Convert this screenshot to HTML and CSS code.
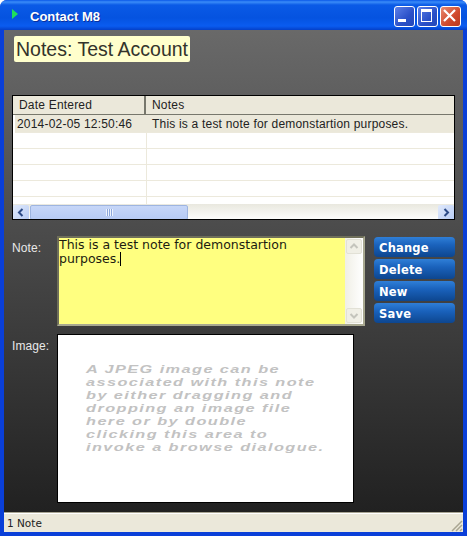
FILE: index.html
```html
<!DOCTYPE html>
<html lang="en">
<head>
    <meta charset="UTF-8">
    <meta name="viewport" content="width=device-width, initial-scale=1.0">
    <title>Contact M8</title>
    <link rel="stylesheet" href="styles.css">
</head>
<body>
    <div class="window">
        <!-- Title bar -->
        <div class="titlebar">
            <svg class="app-icon" width="6" height="10" viewBox="0 0 6 10"><path d="M0 0L6 5L0 10Z" fill="#1fe05a"/></svg>
            <span class="title-text">Contact M8</span>
            <div class="caption-buttons">
                <div class="cap-btn">
                    <svg width="21" height="21" viewBox="0 0 21 21"><rect x="4" y="13" width="8" height="3" fill="#fff"/></svg>
                </div>
                <div class="cap-btn">
                    <svg width="21" height="21" viewBox="0 0 21 21"><path d="M4 3h11v13H4z M5 6v9h9V6z" fill="#fff" fill-rule="evenodd"/></svg>
                </div>
                <div class="cap-btn close">
                    <svg width="21" height="21" viewBox="0 0 21 21"><path d="M4 4L15 15M15 4L4 15" stroke="#fff" stroke-width="2.2"/></svg>
                </div>
            </div>
        </div>

        <div class="client">
            <div class="content">
                <div class="heading"><span>Notes: Test Account</span></div>

                <!-- Notes list -->
                <div class="grid">
                    <div class="grid-head">
                        <div class="col-date">Date Entered</div>
                        <div class="col-notes">Notes</div>
                    </div>
                    <div class="grid-row selected">
                        <div class="col-date">2014-02-05 12:50:46</div>
                        <div class="col-notes">This is a test note for demonstartion purposes.</div>
                    </div>
                    <div class="grid-row"><div class="col-date"></div><div class="col-notes"></div></div>
                    <div class="grid-row"><div class="col-date"></div><div class="col-notes"></div></div>
                    <div class="grid-row"><div class="col-date"></div><div class="col-notes"></div></div>
                    <div class="grid-row"><div class="col-date"></div><div class="col-notes"></div></div>
                    <div class="grid-row short"><div class="col-date"></div><div class="col-notes"></div></div>
                    <div class="hscroll">
                        <div class="scroll-btn">
                            <svg width="16" height="15" viewBox="0 0 16 15"><path d="M9.5 4L6 7.5L9.5 11" fill="none" stroke="#2c4a86" stroke-width="2"/></svg>
                        </div>
                        <div class="hscroll-thumb"><span class="grip"></span></div>
                        <div class="hscroll-track"></div>
                        <div class="scroll-btn">
                            <svg width="16" height="15" viewBox="0 0 16 15"><path d="M6.5 4L10 7.5L6.5 11" fill="none" stroke="#2c4a86" stroke-width="2"/></svg>
                        </div>
                    </div>
                </div>

                <!-- Note editor -->
                <div class="note-section">
                    <div class="field-label">Note:</div>
                    <div class="note-box">
                        <div class="note-text">This is a test note for demonstartion purposes.<span class="caret"></span></div>
                        <div class="vscroll">
                            <div class="vscroll-btn">
                                <svg width="14" height="13" viewBox="0 0 14 13"><path d="M3.5 8L7 4.5L10.5 8" fill="none" stroke="#c4c4bc" stroke-width="2"/></svg>
                            </div>
                            <div class="vscroll-btn">
                                <svg width="14" height="13" viewBox="0 0 14 13"><path d="M3.5 5L7 8.5L10.5 5" fill="none" stroke="#c4c4bc" stroke-width="2"/></svg>
                            </div>
                        </div>
                    </div>
                    <div class="actions">
                        <button class="action-button">Change</button>
                        <button class="action-button">Delete</button>
                        <button class="action-button">New</button>
                        <button class="action-button">Save</button>
                    </div>
                </div>

                <!-- Image drop area -->
                <div class="image-section">
                    <div class="field-label">Image:</div>
                    <div class="image-box">
                        <p class="image-hint">A JPEG image can be<br>associated with this note<br>by either dragging and<br>dropping an image file<br>here or by double<br>clicking this area to<br>invoke a browse dialogue.</p>
                    </div>
                </div>
            </div>

            <div class="statusbar">
                <span>1 Note</span>
                <svg class="resize-grip" width="13" height="13" viewBox="0 0 13 13"><path d="M12 2L2 12M12 6L6 12M12 10L10 12" stroke="#a9a692" stroke-width="1.5"/></svg>
            </div>
        </div>
    </div>
</body>
</html>
```

FILE: styles.css
```css
html, body {
    margin: 0;
    padding: 0;
}

.window {
    width: 467px;
    height: 536px;
    display: flex;
    flex-direction: column;
    background-color: #0a3fd8;
    border-radius: 7px 7px 0 0;
    overflow: hidden;
    font-family: "Liberation Sans", Arial, sans-serif;
}

/* Title bar */
.titlebar {
    height: 30px;
    flex: none;
    box-sizing: border-box;
    display: flex;
    align-items: center;
    padding: 3px 6px 0 12px;
    background: linear-gradient(to bottom, #0a58e8 0, #3a8cf8 2px, #0a5ae6 5px, #0553e0 18px, #0a5cf0 26px, #0440c8 30px);
}

.app-icon {
    margin-top: -6px;
}

.title-text {
    margin-left: 12px;
    color: #fff;
    font-weight: bold;
    font-size: 13px;
    text-shadow: 1px 1px 0 #0a2f9c;
}

.caption-buttons {
    margin-left: auto;
    display: flex;
    gap: 2px;
}

.cap-btn {
    width: 21px;
    height: 21px;
    box-sizing: border-box;
    border: 1px solid #fff;
    border-radius: 3px;
    background: linear-gradient(135deg, #5c80e8, #2a50c8 60%, #2448b8);
    display: flex;
    align-items: center;
    justify-content: center;
    overflow: hidden;
}

.cap-btn svg {
    flex: none;
}

.cap-btn.close {
    background: linear-gradient(135deg, #e88a70, #d0492c 60%, #b83a20);
}

/* Client area */
.client {
    flex: 1;
    margin: 0 4px 4px;
    display: flex;
    flex-direction: column;
    background-color: #222;
}

.content {
    flex: 1;
    padding: 6px 8px 0;
    background: linear-gradient(to bottom, #696969, #212121);
}

.heading {
    height: 26px;
    margin-left: 2px;
    display: flex;
}

.heading span {
    background-color: #ffffcc;
    border-radius: 2px;
    padding: 0 2px;
    color: #33332b;
    font-size: 19.5px;
    line-height: 26px;
}

/* Notes list */
.grid {
    margin-top: 33px;
    width: 443px;
    height: 125px;
    box-sizing: border-box;
    border: 1px solid #000;
    background-color: #fff;
    font-size: 12px;
    letter-spacing: 0.2px;
    color: #222;
    overflow: hidden;
    display: flex;
    flex-direction: column;
}

.grid-head {
    height: 19px;
    flex: none;
    box-sizing: border-box;
    display: flex;
    background-color: #ebe8da;
    border-bottom: 1px solid #77776c;
    line-height: 19px;
}

.grid-head .col-date {
    width: 133px;
    padding-left: 6px;
    border-right: 2px solid #77776c;
}

.grid-head .col-notes {
    padding-left: 6px;
}

.grid-row {
    height: 16px;
    flex: none;
    box-sizing: border-box;
    display: flex;
    border-bottom: 1px solid #ece9dc;
    line-height: 16px;
}

.grid-row.selected {
    height: 18px;
    background-color: #ebe8da;
    line-height: 18px;
    margin-left: 2px;
}

.grid-row.short {
    height: 7px;
    border-bottom: none;
}

.col-date {
    width: 134px;
    flex: none;
    box-sizing: border-box;
    padding-left: 2px;
    border-right: 1px solid #ece9dc;
    white-space: nowrap;
}

.grid-row.selected .col-date {
    width: 132px;
    padding-left: 2px;
    border-right: none;
}

.col-notes {
    flex: 1;
    padding-left: 5px;
    white-space: nowrap;
}

.hscroll {
    height: 17px;
    flex: none;
    display: flex;
    background: linear-gradient(to bottom, #e9e8df, #fff);
}

.scroll-btn {
    width: 16px;
    height: 15px;
    margin: 1px 0;
    border-radius: 2px;
    background: linear-gradient(135deg, #e0e9fb, #b8ccf4);
}

.hscroll-thumb {
    width: 158px;
    height: 15px;
    margin: 1px 0 1px 1px;
    box-sizing: border-box;
    border: 1px solid #9db4e0;
    border-radius: 2px;
    background: linear-gradient(to bottom, #c6d6f8, #b6caf4);
    display: flex;
    align-items: center;
    justify-content: center;
}

.grip {
    width: 7px;
    height: 7px;
    background: repeating-linear-gradient(to right, #eef3fd 0, #eef3fd 1px, #8da8dc 1px, #8da8dc 2px);
}

.hscroll-track {
    flex: 1;
}

/* Note editor */
.note-section {
    margin-top: 16px;
    height: 90px;
    display: flex;
}

.field-label {
    width: 45px;
    flex: none;
    color: #e8e8e8;
    font-size: 12px;
    letter-spacing: 0.1px;
    padding-top: 5px;
}

.note-box {
    width: 308px;
    height: 90px;
    flex: none;
    box-sizing: border-box;
    border: 2px solid;
    border-color: #6f6f5a #a8a890 #a8a890 #6f6f5a;
    display: flex;
    background-color: #ffff80;
}

.note-text {
    flex: 1;
    color: #1c1c10;
    font-family: "DejaVu Sans", sans-serif;
    font-size: 12.5px;
    line-height: 14px;
}

.caret {
    display: inline-block;
    width: 1px;
    height: 14px;
    background-color: #000;
    vertical-align: -3px;
}

.vscroll {
    width: 18px;
    flex: none;
    box-sizing: border-box;
    padding: 1px;
    display: flex;
    flex-direction: column;
    justify-content: space-between;
    background: linear-gradient(to right, #f0efe6, #fff);
}

.vscroll-btn {
    width: 16px;
    height: 15px;
    box-sizing: border-box;
    border: 1px solid #e2e1d6;
    border-radius: 2px;
    background-color: #f0efe6;
}

.vscroll-btn svg {
    display: block;
}

.actions {
    margin-left: 9px;
    padding-top: 1px;
    display: flex;
    flex-direction: column;
    gap: 2px;
}

.action-button {
    width: 81px;
    height: 20px;
    padding: 1px 0 0 5px;
    border: none;
    border-radius: 4px;
    text-align: left;
    color: #fff;
    font-family: "DejaVu Sans", sans-serif;
    font-weight: bold;
    font-size: 11.5px;
    letter-spacing: 0.2px;
    background: linear-gradient(to bottom, #2f7fd8 0, #1a62bc 40%, #0d468f 100%);
}

/* Image drop area */
.image-section {
    margin-top: 8px;
    display: flex;
}

.image-box {
    width: 297px;
    height: 169px;
    flex: none;
    box-sizing: border-box;
    border: 1px solid #000;
    background-color: #fff;
    padding-top: 28px;
    padding-left: 28px;
    overflow: hidden;
}

.image-hint {
    margin: 0;
    color: #c2c2c2;
    font-style: italic;
    font-weight: bold;
    font-size: 11.3px;
    letter-spacing: 1px;
    line-height: 13px;
    white-space: nowrap;
    transform: scaleX(1.44);
    transform-origin: left top;
}

/* Status bar */
.statusbar {
    height: 20px;
    flex: none;
    box-sizing: border-box;
    display: flex;
    align-items: center;
    justify-content: space-between;
    padding-left: 3px;
    background-color: #ebe8da;
    border-top: 1px solid #a8a593;
    box-shadow: inset 0 1px 0 #fff;
    color: #222;
    font-family: "DejaVu Sans", sans-serif;
    font-size: 10.5px;
}

.resize-grip {
    align-self: flex-end;
}
```
